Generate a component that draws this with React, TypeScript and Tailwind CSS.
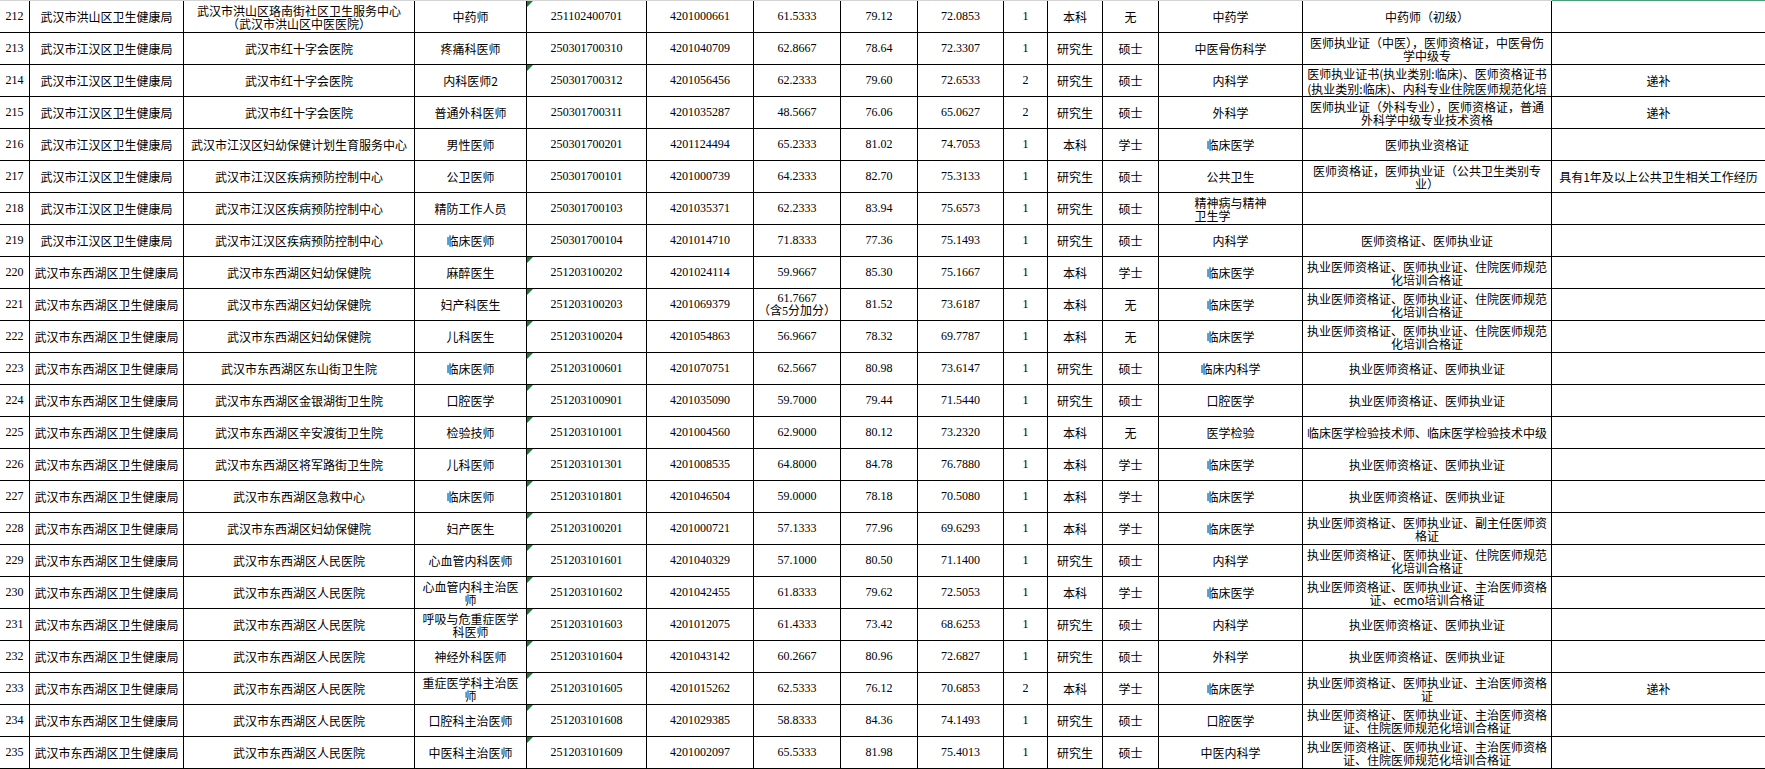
import React from "react"

type Row = {
  no: string
  dept: string
  unit: string
  post: string
  code: string
  ticket: string
  written: string
  interview: string
  total: string
  rank: string
  edu: string
  degree: string
  major: string
  cert: string
  note: string
  flag?: boolean
}

const DXH = "武汉市东西湖区卫生健康局"
const JH = "武汉市江汉区卫生健康局"

const rows: Row[] = [
  { no: "212", dept: "武汉市洪山区卫生健康局", unit: "武汉市洪山区珞南街社区卫生服务中心\n（武汉市洪山区中医医院）", post: "中药师", code: "251102400701", ticket: "4201000661", written: "61.5333", interview: "79.12", total: "72.0853", rank: "1", edu: "本科", degree: "无", major: "中药学", cert: "中药师（初级）", note: "", flag: true },
  { no: "213", dept: JH, unit: "武汉市红十字会医院", post: "疼痛科医师", code: "250301700310", ticket: "4201040709", written: "62.8667", interview: "78.64", total: "72.3307", rank: "1", edu: "研究生", degree: "硕士", major: "中医骨伤科学", cert: "医师执业证（中医），医师资格证，中医骨伤\n学中级专", note: "" },
  { no: "214", dept: JH, unit: "武汉市红十字会医院", post: "内科医师2", code: "250301700312", ticket: "4201056456", written: "62.2333", interview: "79.60", total: "72.6533", rank: "2", edu: "研究生", degree: "硕士", major: "内科学", cert: "医师执业证书(执业类别:临床)、医师资格证书\n(执业类别:临床)、内科专业住院医师规范化培", note: "递补", flag: true },
  { no: "215", dept: JH, unit: "武汉市红十字会医院", post: "普通外科医师", code: "250301700311", ticket: "4201035287", written: "48.5667", interview: "76.06", total: "65.0627", rank: "2", edu: "研究生", degree: "硕士", major: "外科学", cert: "医师执业证（外科专业），医师资格证，普通\n外科学中级专业技术资格", note: "递补" },
  { no: "216", dept: JH, unit: "武汉市江汉区妇幼保健计划生育服务中心", post: "男性医师", code: "250301700201", ticket: "4201124494", written: "65.2333", interview: "81.02", total: "74.7053", rank: "1", edu: "本科", degree: "学士", major: "临床医学", cert: "医师执业资格证", note: "" },
  { no: "217", dept: JH, unit: "武汉市江汉区疾病预防控制中心", post: "公卫医师", code: "250301700101", ticket: "4201000739", written: "64.2333", interview: "82.70", total: "75.3133", rank: "1", edu: "研究生", degree: "硕士", major: "公共卫生", cert: "医师资格证，医师执业证（公共卫生类别专\n业）", note: "具有1年及以上公共卫生相关工作经历" },
  { no: "218", dept: JH, unit: "武汉市江汉区疾病预防控制中心", post: "精防工作人员", code: "250301700103", ticket: "4201035371", written: "62.2333", interview: "83.94", total: "75.6573", rank: "1", edu: "研究生", degree: "硕士", major: "精神病与精神\n卫生学", cert: "", note: "" },
  { no: "219", dept: JH, unit: "武汉市江汉区疾病预防控制中心", post: "临床医师", code: "250301700104", ticket: "4201014710", written: "71.8333", interview: "77.36", total: "75.1493", rank: "1", edu: "研究生", degree: "硕士", major: "内科学", cert: "医师资格证、医师执业证", note: "" },
  { no: "220", dept: DXH, unit: "武汉市东西湖区妇幼保健院", post: "麻醉医生", code: "251203100202", ticket: "4201024114", written: "59.9667", interview: "85.30", total: "75.1667", rank: "1", edu: "本科", degree: "学士", major: "临床医学", cert: "执业医师资格证、医师执业证、住院医师规范\n化培训合格证", note: "", flag: true },
  { no: "221", dept: DXH, unit: "武汉市东西湖区妇幼保健院", post: "妇产科医生", code: "251203100203", ticket: "4201069379", written: "61.7667\n（含5分加分）", interview: "81.52", total: "73.6187", rank: "1", edu: "本科", degree: "无", major: "临床医学", cert: "执业医师资格证、医师执业证、住院医师规范\n化培训合格证", note: "", flag: true },
  { no: "222", dept: DXH, unit: "武汉市东西湖区妇幼保健院", post: "儿科医生", code: "251203100204", ticket: "4201054863", written: "56.9667", interview: "78.32", total: "69.7787", rank: "1", edu: "本科", degree: "无", major: "临床医学", cert: "执业医师资格证、医师执业证、住院医师规范\n化培训合格证", note: "", flag: true },
  { no: "223", dept: DXH, unit: "武汉市东西湖区东山街卫生院", post: "临床医师", code: "251203100601", ticket: "4201070751", written: "62.5667", interview: "80.98", total: "73.6147", rank: "1", edu: "研究生", degree: "硕士", major: "临床内科学", cert: "执业医师资格证、医师执业证", note: "", flag: true },
  { no: "224", dept: DXH, unit: "武汉市东西湖区金银湖街卫生院", post: "口腔医学", code: "251203100901", ticket: "4201035090", written: "59.7000", interview: "79.44", total: "71.5440", rank: "1", edu: "研究生", degree: "硕士", major: "口腔医学", cert: "执业医师资格证、医师执业证", note: "", flag: true },
  { no: "225", dept: DXH, unit: "武汉市东西湖区辛安渡街卫生院", post: "检验技师", code: "251203101001", ticket: "4201004560", written: "62.9000", interview: "80.12", total: "73.2320", rank: "1", edu: "本科", degree: "无", major: "医学检验", cert: "临床医学检验技术师、临床医学检验技术中级", note: "", flag: true },
  { no: "226", dept: DXH, unit: "武汉市东西湖区将军路街卫生院", post: "儿科医师", code: "251203101301", ticket: "4201008535", written: "64.8000", interview: "84.78", total: "76.7880", rank: "1", edu: "本科", degree: "学士", major: "临床医学", cert: "执业医师资格证、医师执业证", note: "", flag: true },
  { no: "227", dept: DXH, unit: "武汉市东西湖区急救中心", post: "临床医师", code: "251203101801", ticket: "4201046504", written: "59.0000", interview: "78.18", total: "70.5080", rank: "1", edu: "本科", degree: "学士", major: "临床医学", cert: "执业医师资格证、医师执业证", note: "", flag: true },
  { no: "228", dept: DXH, unit: "武汉市东西湖区妇幼保健院", post: "妇产医生", code: "251203100201", ticket: "4201000721", written: "57.1333", interview: "77.96", total: "69.6293", rank: "1", edu: "本科", degree: "学士", major: "临床医学", cert: "执业医师资格证、医师执业证、副主任医师资\n格证", note: "", flag: true },
  { no: "229", dept: DXH, unit: "武汉市东西湖区人民医院", post: "心血管内科医师", code: "251203101601", ticket: "4201040329", written: "57.1000", interview: "80.50", total: "71.1400", rank: "1", edu: "研究生", degree: "硕士", major: "内科学", cert: "执业医师资格证、医师执业证、住院医师规范\n化培训合格证", note: "", flag: true },
  { no: "230", dept: DXH, unit: "武汉市东西湖区人民医院", post: "心血管内科主治医\n师", code: "251203101602", ticket: "4201042455", written: "61.8333", interview: "79.62", total: "72.5053", rank: "1", edu: "本科", degree: "学士", major: "临床医学", cert: "执业医师资格证、医师执业证、主治医师资格\n证、ecmo培训合格证", note: "", flag: true },
  { no: "231", dept: DXH, unit: "武汉市东西湖区人民医院", post: "呼吸与危重症医学\n科医师", code: "251203101603", ticket: "4201012075", written: "61.4333", interview: "73.42", total: "68.6253", rank: "1", edu: "研究生", degree: "硕士", major: "内科学", cert: "执业医师资格证、医师执业证", note: "", flag: true },
  { no: "232", dept: DXH, unit: "武汉市东西湖区人民医院", post: "神经外科医师", code: "251203101604", ticket: "4201043142", written: "60.2667", interview: "80.96", total: "72.6827", rank: "1", edu: "研究生", degree: "硕士", major: "外科学", cert: "执业医师资格证、医师执业证", note: "", flag: true },
  { no: "233", dept: DXH, unit: "武汉市东西湖区人民医院", post: "重症医学科主治医\n师", code: "251203101605", ticket: "4201015262", written: "62.5333", interview: "76.12", total: "70.6853", rank: "2", edu: "本科", degree: "学士", major: "临床医学", cert: "执业医师资格证、医师执业证、主治医师资格\n证", note: "递补", flag: true },
  { no: "234", dept: DXH, unit: "武汉市东西湖区人民医院", post: "口腔科主治医师", code: "251203101608", ticket: "4201029385", written: "58.8333", interview: "84.36", total: "74.1493", rank: "1", edu: "研究生", degree: "硕士", major: "口腔医学", cert: "执业医师资格证、医师执业证、主治医师资格\n证、住院医师规范化培训合格证", note: "", flag: true },
  { no: "235", dept: DXH, unit: "武汉市东西湖区人民医院", post: "中医科主治医师", code: "251203101609", ticket: "4201002097", written: "65.5333", interview: "81.98", total: "75.4013", rank: "1", edu: "研究生", degree: "硕士", major: "中医内科学", cert: "执业医师资格证、医师执业证、主治医师资格\n证、住院医师规范化培训合格证", note: "", flag: true },
]

const cell =
  "relative h-8 border-b border-r border-black flex items-center justify-center text-center overflow-hidden whitespace-pre-line text-[12px] leading-[13px] text-black"
const cjk = "font-['Noto_Sans_CJK_SC',sans-serif]"
const num = "font-['Liberation_Serif','Noto_Sans_CJK_SC',serif]"

// excel "number stored as text" marker
const Flag = () => (
  <span className="absolute top-0 left-0 w-0 h-0 border-t-[6px] border-r-[6px] border-t-[#1d7f2e] border-r-transparent" />
)

const TableRow = ({ r }: { r: Row }) => (
  <div className="grid grid-cols-[30px_154px_231px_112px_120px_107px_87px_77px_86px_44px_55px_56px_144px_249px_213px]">
    <div className={`${cell} ${num}`}>{r.no}</div>
    <div className={`${cell} ${cjk}`}>{r.dept}</div>
    <div className={`${cell} ${cjk}`}>{r.unit}</div>
    <div className={`${cell} ${cjk}`}>{r.post}</div>
    <div className={`${cell} ${num}`}>
      {r.flag && <Flag />}
      {r.code}
    </div>
    <div className={`${cell} ${num}`}>{r.ticket}</div>
    <div className={`${cell} ${num}`}>{r.written}</div>
    <div className={`${cell} ${num}`}>{r.interview}</div>
    <div className={`${cell} ${num}`}>{r.total}</div>
    <div className={`${cell} ${num}`}>{r.rank}</div>
    <div className={`${cell} ${cjk}`}>{r.edu}</div>
    <div className={`${cell} ${cjk}`}>{r.degree}</div>
    <div className={`${cell} ${cjk} ${r.no === "218" ? "text-left" : ""}`}>{r.major}</div>
    <div className={`${cell} ${cjk} ${r.no === "214" ? "leading-[15px]" : ""}`}>{r.cert}</div>
    <div className={`${cell} ${cjk} border-r-0`}>{r.note}</div>
  </div>
)

export default function App() {
  return (
    <div className="w-[1765px] h-[769px] overflow-hidden bg-white">
      <div className="flex h-px">
        <div className="w-[1552px] bg-[#d4d4d4]" />
        <div className="flex-1 bg-[#4c9f78]" />
      </div>
      {rows.map((r) => (
        <TableRow key={r.no} r={r} />
      ))}
    </div>
  )
}
